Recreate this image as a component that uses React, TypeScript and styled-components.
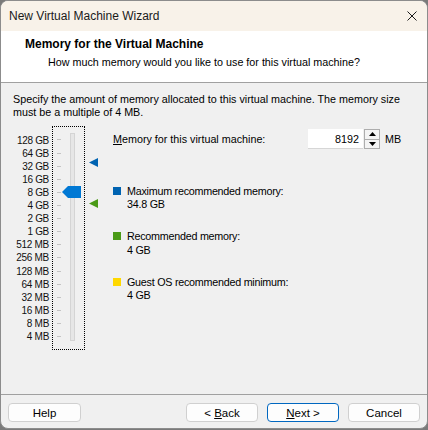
import React from "react";
import styled, { createGlobalStyle } from "styled-components";

const LABELS = [
  "128 GB", "64 GB", "32 GB", "16 GB", "8 GB", "4 GB", "2 GB", "1 GB",
  "512 MB", "256 MB", "128 MB", "64 MB", "32 MB", "16 MB", "8 MB", "4 MB",
];
const STEP = 13.11;
const FIRST = 13;

// value in MB -> vertical center inside the scale box
const yFor = (mb: number) => FIRST + Math.log2(131072 / mb) * STEP;

const GlobalStyle = createGlobalStyle`
  html, body {
    margin: 0;
    padding: 0;
    background: #7a7a7a;
  }
  body {
    font-family: "Liberation Sans", Arial, sans-serif;
    color: #000;
  }
`;

const Window = styled.div`
  width: 428px;
  height: 429px;
  box-sizing: border-box;
  border: 1px solid #8c8c8c;
  border-radius: 8px;
  overflow: hidden;
  display: flex;
  flex-direction: column;
  background: #f0f0f0;
`;

const TitleBar = styled.div`
  height: 30px;
  flex: none;
  background: #f8f2e9;
  display: flex;
  align-items: center;
  justify-content: space-between;
  padding: 0 10px 0 8px;
  font-size: 12px;
  color: #1a1a1a;
`;

const Header = styled.div`
  height: 52px;
  flex: none;
  box-sizing: border-box;
  background: #fff;
  border-bottom: 1px solid #a0a0a0;
  padding: 6px 0 0 24px;

  h1 {
    margin: 0;
    font-size: 12px;
    font-weight: bold;
    line-height: 14px;
  }
  p {
    margin: 4px 0 0 23px;
    font-size: 10.75px;
    line-height: 14px;
  }
`;

const Body = styled.div`
  flex: 1;
  padding: 10px 12px 0 12px;
  font-size: 10.75px;
`;

const Intro = styled.p`
  margin: 0;
  line-height: 13px;
`;

const Main = styled.div`
  display: flex;
  margin-top: 7px;
`;

const SliderGroup = styled.div`
  display: flex;
  align-items: flex-start;
`;

const Labels = styled.div`
  width: 36px;
  padding-top: 7.5px;
  display: flex;
  flex-direction: column;
  align-items: flex-end;
  font-size: 10px;
  letter-spacing: -0.3px;
  color: #111;
`;

const Label = styled.div`
  height: ${STEP}px;
  line-height: ${STEP}px;
  white-space: nowrap;
`;

const ScaleBox = styled.div`
  position: relative;
  margin-left: 3px;
  width: 31px;
  height: 222px;
  border: 1px dotted #000;
  display: flex;
`;

const Ticks = styled.div`
  margin-left: 4px;
  padding-top: 6.45px;
  display: flex;
  flex-direction: column;
`;

const Tick = styled.div`
  height: ${STEP}px;
  display: flex;
  align-items: center;
  &::before {
    content: "";
    width: 4px;
    height: 1px;
    background: #c4c4c4;
  }
`;

const Track = styled.div`
  margin: 6px 0 0 9px;
  width: 3px;
  height: 206px;
  background: #e6e6e6;
  border: 1px solid #d4d4d4;
`;

const Thumb = styled.svg`
  position: absolute;
  left: 9px;
  width: 19px;
  height: 12px;
`;

const Markers = styled.div`
  position: relative;
  margin-left: 4px;
  width: 9px;
  height: 224px;
`;

const Marker = styled.svg`
  position: absolute;
  left: 0;
  width: 9px;
  height: 9px;
`;

const Right = styled.div`
  flex: 1;
  margin-left: 15px;
  padding-top: 3px;
  display: flex;
  flex-direction: column;
`;

const MemRow = styled.div`
  display: flex;
  align-items: center;
  height: 20px;
`;

const MemLabel = styled.span`
  width: 195px;
`;

const SpinInput = styled.div`
  width: 55px;
  height: 20px;
  box-sizing: border-box;
  background: #fff;
  border-bottom: 1px solid #d6d6d6;
  text-align: right;
  padding-right: 4px;
  line-height: 20px;
`;

const SpinButtons = styled.div`
  margin-left: 1px;
  width: 16px;
  height: 20px;
  display: flex;
  flex-direction: column;
`;

const SpinBtn = styled.div`
  flex: 1;
  box-sizing: border-box;
  border: 1px solid #adadad;
  background: #f4f4f4;
  display: flex;
  align-items: center;
  justify-content: center;
  & + & {
    border-top: none;
  }
`;

const Unit = styled.span`
  margin-left: 5px;
`;

const Legend = styled.div`
  display: flex;
  flex-direction: column;
  gap: 18.5px;
  margin-top: 35.5px;
`;

const LegendItem = styled.div`
  display: flex;
  align-items: flex-start;
  line-height: 13.5px;
  letter-spacing: -0.25px;
`;

const Swatch = styled.span<{ $color: string }>`
  width: 8px;
  height: 8px;
  margin-top: 2px;
  margin-right: 6px;
  background: ${(p) => p.$color};
  flex: none;
`;

const Footer = styled.div`
  height: 34px;
  flex: none;
  box-sizing: border-box;
  border-top: 1px solid #a0a0a0;
  padding: 8px 7px 0 7px;
  display: flex;
  gap: 9px;
`;

const Button = styled.button<{ $primary?: boolean }>`
  width: 72px;
  height: 19px;
  padding: 0;
  font-family: "Liberation Sans", Arial, sans-serif;
  font-size: 11.5px;
  color: #000;
  background: #fdfdfd;
  border: 1px solid ${(p) => (p.$primary ? "#0067c0" : "#d0d0d0")};
  border-radius: 4px;
  &:first-child {
    width: 73px;
    margin-right: auto;
  }
`;

const memories = [
  { color: "#0063b1", title: "Maximum recommended memory:", value: "34.8 GB" },
  { color: "#4a9a17", title: "Recommended memory:", value: "4 GB" },
  { color: "#ffd800", title: "Guest OS recommended minimum:", value: "4 GB" },
];

export default function App() {
  const current = 8192;
  const maxRec = 35635;
  const rec = 4096;

  return (
    <>
      <GlobalStyle />
      <Window>
        <TitleBar>
          <span>New Virtual Machine Wizard</span>
          <svg width="10" height="10" viewBox="0 0 10 10">
            <path d="M0.5 0.5 L9.5 9.5 M9.5 0.5 L0.5 9.5" stroke="#1a1a1a" strokeWidth="1" />
          </svg>
        </TitleBar>
        <Header>
          <h1>Memory for the Virtual Machine</h1>
          <p>How much memory would you like to use for this virtual machine?</p>
        </Header>
        <Body>
          <Intro>
            Specify the amount of memory allocated to this virtual machine. The memory size
            <br />
            must be a multiple of 4 MB.
          </Intro>
          <Main>
            <SliderGroup>
              <Labels>
                {LABELS.map((l) => (
                  <Label key={l}>{l}</Label>
                ))}
              </Labels>
              <ScaleBox>
                <Ticks>
                  {LABELS.map((l) => (
                    <Tick key={l} />
                  ))}
                </Ticks>
                <Track />
                <Thumb viewBox="0 0 19 12" style={{ top: yFor(current) - 6 }}>
                  <polygon points="0,6 6,0 19,0 19,12 6,12" fill="#0078d4" />
                </Thumb>
              </ScaleBox>
              <Markers>
                <Marker viewBox="0 0 9 9" style={{ top: yFor(maxRec) - 5.5 }}>
                  <polygon points="0,4.5 9,0 9,9" fill="#0063b1" />
                </Marker>
                <Marker viewBox="0 0 9 9" style={{ top: yFor(rec) - 5.5 }}>
                  <polygon points="0,4.5 9,0 9,9" fill="#4a9a17" />
                </Marker>
              </Markers>
            </SliderGroup>
            <Right>
              <MemRow>
                <MemLabel>
                  <u>M</u>emory for this virtual machine:
                </MemLabel>
                <SpinInput>8192</SpinInput>
                <SpinButtons>
                  <SpinBtn>
                    <svg width="7" height="4" viewBox="0 0 7 4">
                      <polygon points="3.5,0 7,4 0,4" fill="#000" />
                    </svg>
                  </SpinBtn>
                  <SpinBtn>
                    <svg width="7" height="4" viewBox="0 0 7 4">
                      <polygon points="0,0 7,0 3.5,4" fill="#000" />
                    </svg>
                  </SpinBtn>
                </SpinButtons>
                <Unit>MB</Unit>
              </MemRow>
              <Legend>
                {memories.map((m) => (
                  <LegendItem key={m.title}>
                    <Swatch $color={m.color} />
                    <div>
                      {m.title}
                      <br />
                      {m.value}
                    </div>
                  </LegendItem>
                ))}
              </Legend>
            </Right>
          </Main>
        </Body>
        <Footer>
          <Button>Help</Button>
          <Button>
            &lt; <u>B</u>ack
          </Button>
          <Button $primary>
            <u>N</u>ext &gt;
          </Button>
          <Button>Cancel</Button>
        </Footer>
      </Window>
    </>
  );
}
